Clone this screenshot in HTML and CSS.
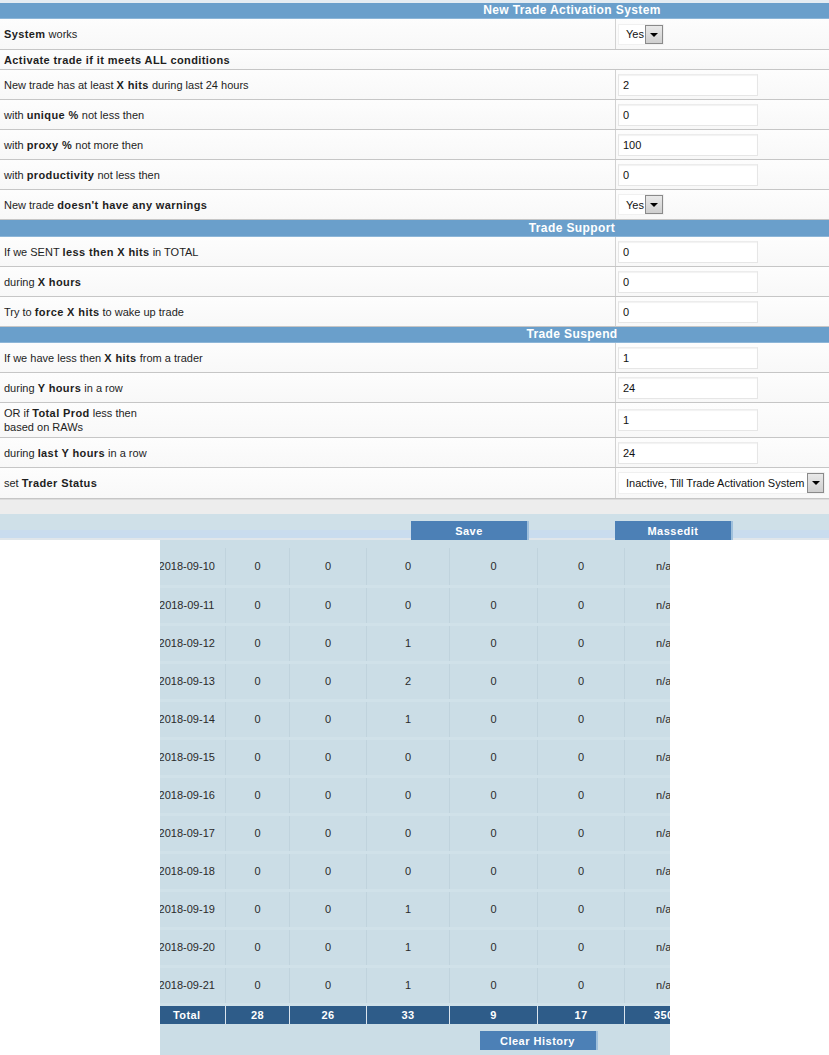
FILE: index.html
```html
<!DOCTYPE html>
<html>
	<head>
		<meta charset="UTF-8">
		<title>Trade Settings</title>
		<link rel="stylesheet" href="styles.css">
	</head>
	<body>
		<div class="settings">
			<div class="sect-head head-slim">New Trade Activation System</div>
			<div class="row row-first">
				<div class="label"><b>System</b> works</div>
				<div class="field"><div class="select sel-short">Yes<span class="arrow"></span></div></div>
			</div>
			<div class="row row-full">
				<div class="label"><b>Activate trade if it meets ALL conditions</b></div>
			</div>
			<div class="row">
				<div class="label">New trade has at least <b>X hits</b> during last 24 hours</div>
				<div class="field"><input type="text" value="2"></div>
			</div>
			<div class="row">
				<div class="label">with <b>unique %</b> not less then</div>
				<div class="field"><input type="text" value="0"></div>
			</div>
			<div class="row">
				<div class="label">with <b>proxy %</b> not more then</div>
				<div class="field"><input type="text" value="100"></div>
			</div>
			<div class="row">
				<div class="label">with <b>productivity</b> not less then</div>
				<div class="field"><input type="text" value="0"></div>
			</div>
			<div class="row">
				<div class="label">New trade <b>doesn't have any warnings</b></div>
				<div class="field"><div class="select sel-short">Yes<span class="arrow"></span></div></div>
			</div>

			<div class="sect-head">Trade Support</div>
			<div class="row">
				<div class="label">If we SENT <b>less then X hits</b> in TOTAL</div>
				<div class="field"><input type="text" value="0"></div>
			</div>
			<div class="row">
				<div class="label">during <b>X hours</b></div>
				<div class="field"><input type="text" value="0"></div>
			</div>
			<div class="row">
				<div class="label">Try to <b>force X hits</b> to wake up trade</div>
				<div class="field"><input type="text" value="0"></div>
			</div>

			<div class="sect-head head-slim">Trade Suspend</div>
			<div class="row">
				<div class="label">If we have less then <b>X hits</b> from a trader</div>
				<div class="field"><input type="text" value="1"></div>
			</div>
			<div class="row">
				<div class="label">during <b>Y hours</b> in a row</div>
				<div class="field"><input type="text" value="24"></div>
			</div>
			<div class="row row-tall">
				<div class="label">OR if <b>Total Prod</b> less then<br>based on RAWs</div>
				<div class="field"><input type="text" value="1"></div>
			</div>
			<div class="row">
				<div class="label">during <b>last Y hours</b> in a row</div>
				<div class="field"><input type="text" value="24"></div>
			</div>
			<div class="row row-last">
				<div class="label">set <b>Trader Status</b></div>
				<div class="field"><div class="select sel-long">Inactive, Till Trade Activation System<span class="arrow"></span></div></div>
			</div>
		</div>

		<div class="gap"></div>
		<div class="actions">
			<button class="btn">Save</button>
			<button class="btn">Massedit</button>
		</div>

		<div class="stats">
			<table>
				<colgroup>
					<col style="width:77px"><col style="width:64px"><col style="width:77px"><col style="width:83px">
					<col style="width:88px"><col style="width:87px"><col style="width:78px">
				</colgroup>
				<tbody>
					<tr><td>2018-09-10</td><td>0</td><td>0</td><td>0</td><td>0</td><td>0</td><td>n/a</td></tr>
					<tr><td>2018-09-11</td><td>0</td><td>0</td><td>0</td><td>0</td><td>0</td><td>n/a</td></tr>
					<tr><td>2018-09-12</td><td>0</td><td>0</td><td>1</td><td>0</td><td>0</td><td>n/a</td></tr>
					<tr><td>2018-09-13</td><td>0</td><td>0</td><td>2</td><td>0</td><td>0</td><td>n/a</td></tr>
					<tr><td>2018-09-14</td><td>0</td><td>0</td><td>1</td><td>0</td><td>0</td><td>n/a</td></tr>
					<tr><td>2018-09-15</td><td>0</td><td>0</td><td>0</td><td>0</td><td>0</td><td>n/a</td></tr>
					<tr><td>2018-09-16</td><td>0</td><td>0</td><td>0</td><td>0</td><td>0</td><td>n/a</td></tr>
					<tr><td>2018-09-17</td><td>0</td><td>0</td><td>0</td><td>0</td><td>0</td><td>n/a</td></tr>
					<tr><td>2018-09-18</td><td>0</td><td>0</td><td>0</td><td>0</td><td>0</td><td>n/a</td></tr>
					<tr><td>2018-09-19</td><td>0</td><td>0</td><td>1</td><td>0</td><td>0</td><td>n/a</td></tr>
					<tr><td>2018-09-20</td><td>0</td><td>0</td><td>1</td><td>0</td><td>0</td><td>n/a</td></tr>
					<tr><td>2018-09-21</td><td>0</td><td>0</td><td>1</td><td>0</td><td>0</td><td>n/a</td></tr>
					<tr class="total"><td>Total</td><td>28</td><td>26</td><td>33</td><td>9</td><td>17</td><td>350</td></tr>
				</tbody>
			</table>
			<div class="stats-foot">
				<button class="btn">Clear History</button>
			</div>
		</div>
	</body>
</html>
```

FILE: styles.css
```css
*{
	margin: 0;
	padding: 0;
	box-sizing: border-box;
}
body{
	font-family: "Liberation Sans", Arial, sans-serif;
	font-size: 11px;
	color: #1e1e1e;
	background: #fff;
	width: 829px;
	overflow: hidden;
}
b{
	letter-spacing: .4px;
}
/* settings block */
.settings{
	background: #fff;
	border-top: 3px solid #e4ecf2;
}
.sect-head{
	height: 17px;
	line-height: 16px;
	background: #6a9fcb;
	border-bottom: 1px solid #8db6d8;
	color: #fff;
	font-weight: bold;
	font-size: 12px;
	letter-spacing: .4px;
	text-align: center;
	padding-left: 315px;
}
.head-slim{
	height: 16px;
	line-height: 15px;
}
.row{
	display: flex;
	align-items: center;
	min-height: 30px;
	border-bottom: 1px solid #c6c6c6;
	background: linear-gradient(#fdfdfd, #f8f8f8);
}
.row-first{
	min-height: 31px;
}
.row-full{
	min-height: 20px;
}
.row-tall{
	min-height: 35px;
}
.row-last{
	min-height: 31px;
}
.label{
	width: 615px;
	padding: 0 4px;
	line-height: 14px;
}
.row-full .label{
	width: 100%;
}
.field{
	flex: 1;
	align-self: stretch;
	border-left: 1px solid #d2d2d2;
	padding-left: 2px;
	display: flex;
	align-items: center;
}
.field input{
	width: 140px;
	height: 22px;
	border: 1px solid #e6e6e6;
	border-top-color: #ececec;
	background: #fff;
	box-shadow: inset 0 1px 1px #f2f2f2;
	font-family: "Liberation Sans", Arial, sans-serif;
	font-size: 11px;
	color: #111;
	padding-left: 4px;
	outline: none;
}
.select{
	height: 21px;
	display: flex;
	align-items: center;
	background: #fff;
	border: 1px solid #f0f0f0;
	padding-left: 7px;
	font-size: 11px;
	color: #111;
	position: relative;
}
.sel-short{
	width: 46px;
}
.sel-long{
	width: 207px;
	height: 22px;
}
.arrow{
	position: absolute;
	right: 0;
	top: 0;
	width: 18px;
	height: 19px;
	border: 1px solid #8a8a8a;
	background: linear-gradient(#e9e9e9, #cfcfcf);
}
.sel-long .arrow{
	width: 17px;
	height: 20px;
}
.arrow:after{
	content: "";
	position: absolute;
	left: 4px;
	top: 7px;
	border-left: 4px solid transparent;
	border-right: 4px solid transparent;
	border-top: 4px solid #000;
}
/* buttons strip */
.gap{
	height: 15px;
	background: #ededed;
	border-top: 1px solid #dcdcdc;
}
.actions{
	height: 26px;
	background: linear-gradient(#cfe0e8 0, #cfe0e8 16px, #c9dcee 16px, #c9dcee 24px, #e0e6ea 24px);
	display: flex;
	align-items: flex-end;
	padding-left: 411px;
	gap: 86px;
}
.btn{
	width: 118px;
	height: 19px;
	border: none;
	border-right: 2px solid #9fc0dc;
	background: #4c80b6;
	color: #fff;
	font-family: "Liberation Sans", Arial, sans-serif;
	font-weight: bold;
	font-size: 11px;
	letter-spacing: .5px;
	cursor: pointer;
}
/* daily statistics */
.stats{
	width: 510px;
	margin: 0 auto;
	height: 520px;
	padding-top: 8px;
	background: #cbdde6;
	overflow: hidden;
}
.stats table{
	margin-left: -11px;
	border-collapse: collapse;
	table-layout: fixed;
	width: 554px;
}
.stats td{
	height: 38px;
	text-align: center;
	color: #2a2a2a;
	background: #cbdde6;
	border-left: 1px solid #c0d3dd;
	border-bottom: 3px solid #d0e1e9;
	white-space: nowrap;
	overflow: hidden;
}
.stats td:first-child{
	border-left: none;
}
.stats .total td{
	height: 20px;
	background: #2e5c89;
	color: #fff;
	font-weight: bold;
	letter-spacing: .4px;
	border-top: 2px solid #5a86b0;
	border-bottom: none;
	border-left: 1px solid #dbe5ee;
}
.stats .total td:first-child{
	border-left: none;
}
.stats-foot{
	padding: 7px 0 0 320px;
}
```
